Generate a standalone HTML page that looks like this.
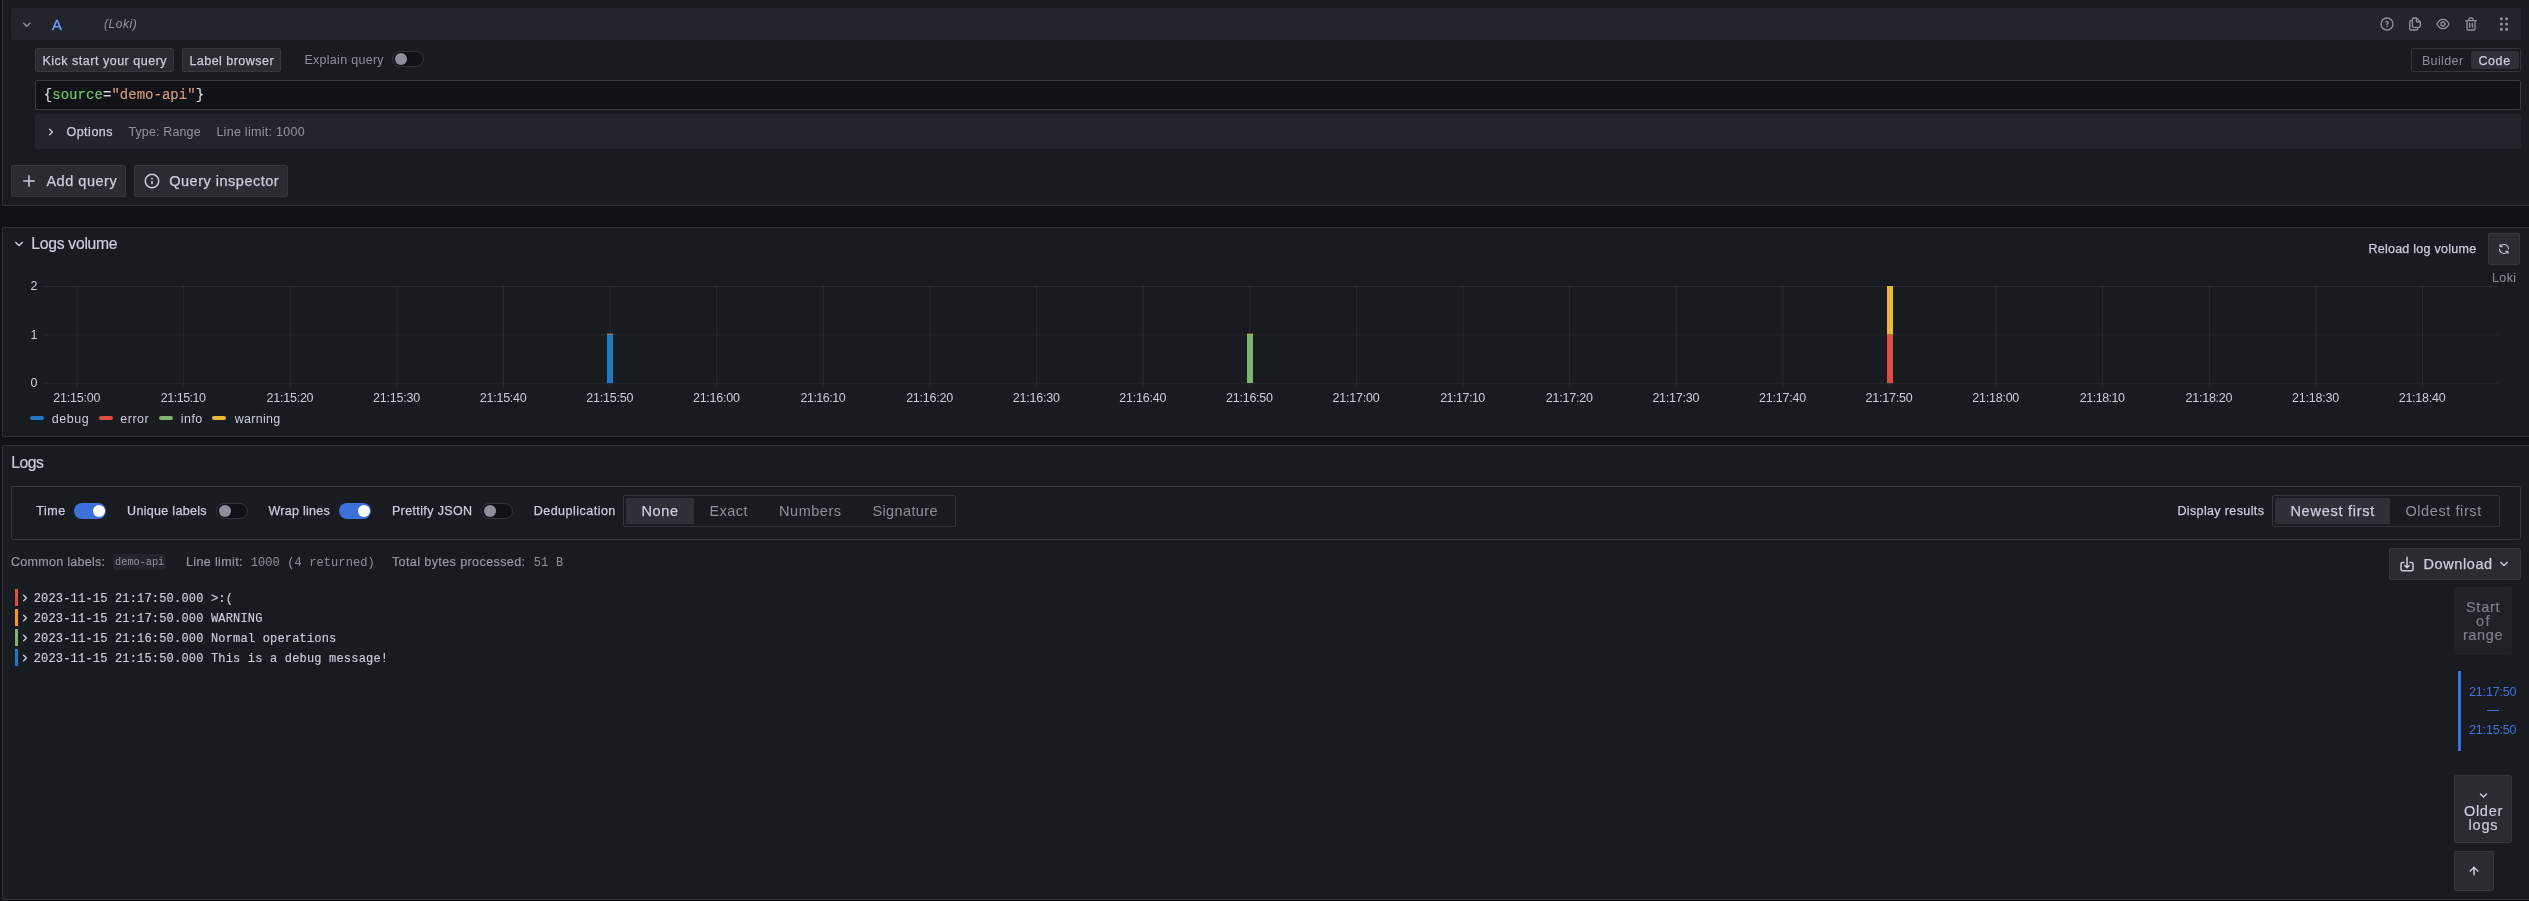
<!DOCTYPE html>
<html><head><meta charset="utf-8"><title>Explore - Loki</title>
<style>
html,body{margin:0;padding:0;background:#111217;}
html{width:2529px;height:901px;overflow:hidden;}
body{width:2529px;height:901px;overflow:hidden;position:relative;font-family:"Liberation Sans",sans-serif;}
.b{position:absolute;box-sizing:border-box;display:block;}
.t{position:absolute;white-space:pre;display:block;}
#tx{position:absolute;left:0;top:0;width:2529px;height:901px;will-change:transform;}
</style></head><body>
<div class="b" style="left:2px;top:-6px;width:2527px;height:212px;background:#181b1f;border:1px solid #2f3136;border-radius:2px;border-right:none;border-top-right-radius:0;border-bottom-right-radius:0;"></div>
<div class="b" style="left:2px;top:227px;width:2527px;height:210px;background:#181b1f;border:1px solid #2f3136;border-radius:2px;border-right:none;border-top-right-radius:0;border-bottom-right-radius:0;"></div>
<div class="b" style="left:2px;top:445px;width:2527px;height:455px;background:#181b1f;border:1px solid #2f3136;border-radius:2px;border-right:none;border-top-right-radius:0;border-bottom-right-radius:0;"></div>
<div class="b" style="left:11px;top:8px;width:2510px;height:32px;background:#22252b;border-radius:2px;"></div>
<div class="b" style="left:35px;top:48px;width:139px;height:24px;background:#2a2c31;border:1px solid #36383e;border-radius:2px;"></div>
<div class="b" style="left:182px;top:48px;width:99px;height:24px;background:#2a2c31;border:1px solid #36383e;border-radius:2px;"></div>
<div class="b" style="left:392px;top:51px;width:32px;height:16px;background:#111217;border:1px solid #34363c;border-radius:8px;"></div>
<div class="b" style="left:395px;top:53px;width:12px;height:12px;background:#8e8e9b;border-radius:6px;"></div>
<div class="b" style="left:2411px;top:48px;width:110px;height:24px;border:1px solid #34363c;border-radius:2px;"></div>
<div class="b" style="left:2471px;top:51px;width:47.5px;height:18px;background:#2d3037;border-radius:2px;"></div>
<div class="b" style="left:35px;top:80px;width:2486px;height:30px;background:#111217;border:1px solid #3a3c42;border-radius:2px;"></div>
<div class="b" style="left:35px;top:114px;width:2486px;height:35px;background:#22252b;border-radius:2px;"></div>
<div class="b" style="left:11px;top:165px;width:115px;height:32px;background:#2a2c31;border:1px solid #36383e;border-radius:2px;"></div>
<div class="b" style="left:134px;top:165px;width:154px;height:32px;background:#2a2c31;border:1px solid #36383e;border-radius:2px;"></div>
<div class="b" style="left:2488px;top:233px;width:32px;height:32px;background:#2a2c31;border:1px solid #36383e;border-radius:2px;"></div>
<div class="b" style="left:30px;top:416px;width:14px;height:4px;background:#1f78c1;border-radius:2px;"></div>
<div class="b" style="left:99px;top:416px;width:14px;height:4px;background:#e24d42;border-radius:2px;"></div>
<div class="b" style="left:159px;top:416px;width:14px;height:4px;background:#7eb26d;border-radius:2px;"></div>
<div class="b" style="left:212px;top:416px;width:14px;height:4px;background:#eab839;border-radius:2px;"></div>
<div class="b" style="left:11px;top:486px;width:2510px;height:54px;border:1px solid #383a40;border-radius:2px;"></div>
<div class="b" style="left:74px;top:503px;width:32px;height:16px;background:#3d71d9;border-radius:8px;"></div>
<div class="b" style="left:92.6px;top:505px;width:12px;height:12px;background:#ffffff;border-radius:6px;"></div>
<div class="b" style="left:216px;top:503px;width:32px;height:16px;background:#111217;border:1px solid #34363c;border-radius:8px;"></div>
<div class="b" style="left:219px;top:505px;width:12px;height:12px;background:#8e8e9b;border-radius:6px;"></div>
<div class="b" style="left:339px;top:503px;width:32px;height:16px;background:#3d71d9;border-radius:8px;"></div>
<div class="b" style="left:357.6px;top:505px;width:12px;height:12px;background:#ffffff;border-radius:6px;"></div>
<div class="b" style="left:481px;top:503px;width:32px;height:16px;background:#111217;border:1px solid #34363c;border-radius:8px;"></div>
<div class="b" style="left:484px;top:505px;width:12px;height:12px;background:#8e8e9b;border-radius:6px;"></div>
<div class="b" style="left:623px;top:495px;width:333px;height:32px;border:1px solid #34363c;border-radius:2px;"></div>
<div class="b" style="left:626px;top:498px;width:68px;height:26px;background:#2d3037;border-radius:2px;"></div>
<div class="b" style="left:2272px;top:495px;width:228px;height:32px;border:1px solid #34363c;border-radius:2px;"></div>
<div class="b" style="left:2275px;top:498px;width:115px;height:26px;background:#2d3037;border-radius:2px;"></div>
<div class="b" style="left:113px;top:554px;width:53px;height:16px;background:#22252b;border-radius:2px;"></div>
<div class="b" style="left:2389px;top:548px;width:132px;height:32px;background:#2a2c31;border:1px solid #36383e;border-radius:2px;"></div>
<div class="b" style="left:15px;top:589px;width:3px;height:17px;background:#e24d42;"></div>
<div class="b" style="left:15px;top:609px;width:3px;height:17px;background:#ff9900;"></div>
<div class="b" style="left:15px;top:629px;width:3px;height:17px;background:#7eb26d;"></div>
<div class="b" style="left:15px;top:649px;width:3px;height:17px;background:#1f78c1;"></div>
<div class="b" style="left:2454px;top:587px;width:58px;height:68px;background:#1f2227;border-radius:2px;"></div>
<div class="b" style="left:2458px;top:671px;width:3px;height:80px;background:#3d71d9;"></div>
<div class="b" style="left:2487px;top:710px;width:12px;height:1px;background:#4474da;"></div>
<div class="b" style="left:2454px;top:775px;width:58px;height:68px;background:#2a2c31;border:1px solid #36383e;border-radius:2px;"></div>
<div class="b" style="left:2454px;top:851px;width:40px;height:40px;background:#2a2c31;border:1px solid #36383e;border-radius:2px;"></div>
<svg class="b" style="left:18.25px;top:15.65px;" width="17.5" height="17.5" viewBox="0 0 24 24"><path d="M17,9.17a1,1,0,0,0-1.41,0L12,12.71,8.46,9.17a1,1,0,0,0-1.41,0,1,1,0,0,0,0,1.42l4.24,4.24a1,1,0,0,0,1.42,0L17,10.59A1,1,0,0,0,17,9.17Z" fill="rgba(204,204,220,0.65)"/></svg>
<svg class="b" style="left:2379px;top:16px;" width="16" height="16" viewBox="0 0 24 24"><path d="M11.29,15.29a1.58,1.58,0,0,0-.12.15.76.76,0,0,0-.09.18.64.64,0,0,0-.06.18,1.36,1.36,0,0,0,0,.2.84.84,0,0,0,.08.38.9.9,0,0,0,.54.54.94.94,0,0,0,.76,0,.9.9,0,0,0,.54-.54A1,1,0,0,0,13,16a1,1,0,0,0-.29-.71A1,1,0,0,0,11.29,15.29ZM12,2A10,10,0,1,0,22,12,10,10,0,0,0,12,2Zm0,18a8,8,0,1,1,8-8A8,8,0,0,1,12,20ZM12,7A3,3,0,0,0,9.4,8.5a1,1,0,1,0,1.73,1A1,1,0,0,1,12,9a1,1,0,0,1,0,2,1,1,0,0,0-1,1v1a1,1,0,0,0,2,0v-.18A3,3,0,0,0,12,7Z" fill="rgba(204,204,220,0.65)"/></svg>
<svg class="b" style="left:2407px;top:16px;" width="16" height="16" viewBox="0 0 24 24"><path d="M21,8.94a1.31,1.31,0,0,0-.06-.27l0-.09a1.07,1.07,0,0,0-.19-.28h0l-6-6h0a1.07,1.07,0,0,0-.28-.19.32.32,0,0,0-.09,0A.88.88,0,0,0,14.05,2H10A3,3,0,0,0,7,5V6H6A3,3,0,0,0,3,9V19a3,3,0,0,0,3,3h8a3,3,0,0,0,3-3V18h1a3,3,0,0,0,3-3V9S21,9,21,8.94ZM15,5.41,17.59,8H16a1,1,0,0,1-1-1ZM15,19a1,1,0,0,1-1,1H6a1,1,0,0,1-1-1V9A1,1,0,0,1,6,8H7v7a3,3,0,0,0,3,3h5Zm4-4a1,1,0,0,1-1,1H10a1,1,0,0,1-1-1V5a1,1,0,0,1,1-1h3V7a3,3,0,0,0,3,3h3Z" fill="rgba(204,204,220,0.65)"/></svg>
<svg class="b" style="left:2435px;top:16px;" width="16" height="16" viewBox="0 0 24 24"><path d="M21.92,11.6C19.9,6.91,16.1,4,12,4S4.1,6.91,2.08,11.6a1,1,0,0,0,0,.8C4.1,17.09,7.9,20,12,20s7.9-2.91,9.92-7.6A1,1,0,0,0,21.92,11.6ZM12,18c-3.17,0-6.17-2.29-7.9-6C5.83,8.29,8.83,6,12,6s6.17,2.29,7.9,6C18.17,15.71,15.17,18,12,18ZM12,8a4,4,0,1,0,4,4A4,4,0,0,0,12,8Zm0,6a2,2,0,1,1,2-2A2,2,0,0,1,12,14Z" fill="rgba(204,204,220,0.65)"/></svg>
<svg class="b" style="left:2463px;top:16px;" width="16" height="16" viewBox="0 0 24 24"><path d="M10,18a1,1,0,0,0,1-1V11a1,1,0,0,0-2,0v6A1,1,0,0,0,10,18ZM20,6H16V5a3,3,0,0,0-3-3H11A3,3,0,0,0,8,5V6H4A1,1,0,0,0,4,8H5V19a3,3,0,0,0,3,3h8a3,3,0,0,0,3-3V8h1a1,1,0,0,0,0-2ZM10,5a1,1,0,0,1,1-1h2a1,1,0,0,1,1,1V6H10Zm7,14a1,1,0,0,1-1,1H8a1,1,0,0,1-1-1V8H17Zm-3-1a1,1,0,0,0,1-1V11a1,1,0,0,0-2,0v6A1,1,0,0,0,14,18Z" fill="rgba(204,204,220,0.65)"/></svg>
<svg class="b" style="left:2495px;top:15px;" width="18" height="18" viewBox="0 0 24 24"><path d="M8.5,10a2,2,0,1,0,2,2A2,2,0,0,0,8.5,10Zm0,7a2,2,0,1,0,2,2A2,2,0,0,0,8.5,17Zm7-10a2,2,0,1,0-2-2A2,2,0,0,0,15.5,7Zm-7-4a2,2,0,1,0,2,2A2,2,0,0,0,8.5,3Zm7,14a2,2,0,1,0,2,2A2,2,0,0,0,15.5,17Zm0-7a2,2,0,1,0,2,2A2,2,0,0,0,15.5,10Z" fill="rgba(204,204,220,0.65)"/></svg>
<svg class="b" style="left:43px;top:124.3px;" width="16" height="16" viewBox="0 0 24 24"><path d="M14.83,11.29,10.59,7.05a1,1,0,0,0-1.42,0,1,1,0,0,0,0,1.41L12.71,12,9.17,15.54a1,1,0,0,0,0,1.41,1,1,0,0,0,.71.29,1,1,0,0,0,.71-.29l4.24-4.24A1,1,0,0,0,14.83,11.29Z" fill="#ccccdc"/></svg>
<svg class="b" style="left:20px;top:172px;" width="18" height="18" viewBox="0 0 24 24"><path d="M19,11H13V5a1,1,0,0,0-2,0v6H5a1,1,0,0,0,0,2h6v6a1,1,0,0,0,2,0V13h6a1,1,0,0,0,0-2Z" fill="#ccccdc"/></svg>
<svg class="b" style="left:142.9px;top:172px;" width="18" height="18" viewBox="0 0 24 24"><path d="M12,2A10,10,0,1,0,22,12,10.01114,10.01114,0,0,0,12,2Zm0,18a8,8,0,1,1,8-8A8.00917,8.00917,0,0,1,12,20Zm0-8.5a1,1,0,0,0-1,1v3a1,1,0,0,0,2,0v-3A1,1,0,0,0,12,11.5Zm0-4a1.25,1.25,0,1,0,1.25,1.25A1.25,1.25,0,0,0,12,7.5Z" fill="#ccccdc"/></svg>
<svg class="b" style="left:10px;top:235.3px;" width="18" height="18" viewBox="0 0 24 24"><path d="M17,9.17a1,1,0,0,0-1.41,0L12,12.71,8.46,9.17a1,1,0,0,0-1.41,0,1,1,0,0,0,0,1.42l4.24,4.24a1,1,0,0,0,1.42,0L17,10.59A1,1,0,0,0,17,9.17Z" fill="#ccccdc"/></svg>
<svg class="b" style="left:2498px;top:243px;" width="12" height="12" viewBox="0 0 24 24"><path d="M19.91,15.51H15.38a1,1,0,0,0,0,2h2.4A8,8,0,0,1,4,12a1,1,0,0,0-2,0,10,10,0,0,0,16.88,7.23V21a1,1,0,0,0,2,0V16.5A1,1,0,0,0,19.91,15.51ZM12,2A10,10,0,0,0,5.12,4.77V3a1,1,0,0,0-2,0V7.5a1,1,0,0,0,1,1h4.5a1,1,0,0,0,0-2H6.22A8,8,0,0,1,20,12a1,1,0,0,0,2,0A10,10,0,0,0,12,2Z" fill="#ccccdc"/></svg>
<svg class="b" style="left:0px;top:270px;" width="2529" height="130" viewBox="0 270 2529 130"><path d="M43 286.5 H2498" stroke="rgba(204,204,220,0.09)" stroke-width="1"/><path d="M43 334.95 H2498" stroke="rgba(204,204,220,0.09)" stroke-width="1"/><path d="M43 383.2 H2498" stroke="rgba(204,204,220,0.09)" stroke-width="1"/><path d="M77.1 286 V387" stroke="rgba(204,204,220,0.09)" stroke-width="1"/><path d="M183.71 286 V387" stroke="rgba(204,204,220,0.09)" stroke-width="1"/><path d="M290.32 286 V387" stroke="rgba(204,204,220,0.09)" stroke-width="1"/><path d="M396.93 286 V387" stroke="rgba(204,204,220,0.09)" stroke-width="1"/><path d="M503.54 286 V387" stroke="rgba(204,204,220,0.09)" stroke-width="1"/><path d="M610.15 286 V387" stroke="rgba(204,204,220,0.09)" stroke-width="1"/><path d="M716.76 286 V387" stroke="rgba(204,204,220,0.09)" stroke-width="1"/><path d="M823.37 286 V387" stroke="rgba(204,204,220,0.09)" stroke-width="1"/><path d="M929.98 286 V387" stroke="rgba(204,204,220,0.09)" stroke-width="1"/><path d="M1036.59 286 V387" stroke="rgba(204,204,220,0.09)" stroke-width="1"/><path d="M1143.2 286 V387" stroke="rgba(204,204,220,0.09)" stroke-width="1"/><path d="M1249.81 286 V387" stroke="rgba(204,204,220,0.09)" stroke-width="1"/><path d="M1356.42 286 V387" stroke="rgba(204,204,220,0.09)" stroke-width="1"/><path d="M1463.03 286 V387" stroke="rgba(204,204,220,0.09)" stroke-width="1"/><path d="M1569.64 286 V387" stroke="rgba(204,204,220,0.09)" stroke-width="1"/><path d="M1676.25 286 V387" stroke="rgba(204,204,220,0.09)" stroke-width="1"/><path d="M1782.86 286 V387" stroke="rgba(204,204,220,0.09)" stroke-width="1"/><path d="M1889.47 286 V387" stroke="rgba(204,204,220,0.09)" stroke-width="1"/><path d="M1996.08 286 V387" stroke="rgba(204,204,220,0.09)" stroke-width="1"/><path d="M2102.69 286 V387" stroke="rgba(204,204,220,0.09)" stroke-width="1"/><path d="M2209.3 286 V387" stroke="rgba(204,204,220,0.09)" stroke-width="1"/><path d="M2315.91 286 V387" stroke="rgba(204,204,220,0.09)" stroke-width="1"/><path d="M2422.52 286 V387" stroke="rgba(204,204,220,0.09)" stroke-width="1"/><rect x="607" y="334" width="6" height="49" fill="#1f78c1"/><rect x="607" y="333.7" width="6" height="0.6" fill="#eab839"/><rect x="1887" y="382.7" width="6" height="0.5" fill="#1f78c1"/><rect x="1247" y="334" width="6" height="49" fill="#7eb26d"/><rect x="1247" y="333.7" width="6" height="0.6" fill="#eab839"/><rect x="1887" y="334.5" width="6" height="48.5" fill="#e24d42"/><rect x="1887" y="286" width="6" height="48.5" fill="#eab839"/></svg>
<svg class="b" style="left:2398px;top:555px;" width="18" height="18" viewBox="0 0 24 24"><path d="M8.29,13.29a1,1,0,0,0,0,1.42l3,3a1,1,0,0,0,1.42,0l3-3a1,1,0,0,0-1.42-1.42L13,14.59V3a1,1,0,0,0-2,0V14.59l-1.29-1.3A1,1,0,0,0,8.29,13.29ZM18,9H16a1,1,0,0,0,0,2h2a1,1,0,0,1,1,1v7a1,1,0,0,1-1,1H6a1,1,0,0,1-1-1V12a1,1,0,0,1,1-1H8A1,1,0,0,0,8,9H6a3,3,0,0,0-3,3v7a3,3,0,0,0,3,3H18a3,3,0,0,0,3-3V12A3,3,0,0,0,18,9Z" fill="#ccccdc"/></svg>
<svg class="b" style="left:2495px;top:555.3px;" width="18" height="18" viewBox="0 0 24 24"><path d="M17,9.17a1,1,0,0,0-1.41,0L12,12.71,8.46,9.17a1,1,0,0,0-1.41,0,1,1,0,0,0,0,1.42l4.24,4.24a1,1,0,0,0,1.42,0L17,10.59A1,1,0,0,0,17,9.17Z" fill="#ccccdc"/></svg>
<svg class="b" style="left:16.75px;top:589.5px;" width="16" height="16" viewBox="0 0 24 24"><path d="M14.83,11.29,10.59,7.05a1,1,0,0,0-1.42,0,1,1,0,0,0,0,1.41L12.71,12,9.17,15.54a1,1,0,0,0,0,1.41,1,1,0,0,0,.71.29,1,1,0,0,0,.71-.29l4.24-4.24A1,1,0,0,0,14.83,11.29Z" fill="#ccccdc"/></svg>
<svg class="b" style="left:16.75px;top:609.5px;" width="16" height="16" viewBox="0 0 24 24"><path d="M14.83,11.29,10.59,7.05a1,1,0,0,0-1.42,0,1,1,0,0,0,0,1.41L12.71,12,9.17,15.54a1,1,0,0,0,0,1.41,1,1,0,0,0,.71.29,1,1,0,0,0,.71-.29l4.24-4.24A1,1,0,0,0,14.83,11.29Z" fill="#ccccdc"/></svg>
<svg class="b" style="left:16.75px;top:629.5px;" width="16" height="16" viewBox="0 0 24 24"><path d="M14.83,11.29,10.59,7.05a1,1,0,0,0-1.42,0,1,1,0,0,0,0,1.41L12.71,12,9.17,15.54a1,1,0,0,0,0,1.41,1,1,0,0,0,.71.29,1,1,0,0,0,.71-.29l4.24-4.24A1,1,0,0,0,14.83,11.29Z" fill="#ccccdc"/></svg>
<svg class="b" style="left:16.75px;top:649.5px;" width="16" height="16" viewBox="0 0 24 24"><path d="M14.83,11.29,10.59,7.05a1,1,0,0,0-1.42,0,1,1,0,0,0,0,1.41L12.71,12,9.17,15.54a1,1,0,0,0,0,1.41,1,1,0,0,0,.71.29,1,1,0,0,0,.71-.29l4.24-4.24A1,1,0,0,0,14.83,11.29Z" fill="#ccccdc"/></svg>
<svg class="b" style="left:2474.5px;top:786.8px;" width="17" height="17" viewBox="0 0 24 24"><path d="M17,9.17a1,1,0,0,0-1.41,0L12,12.71,8.46,9.17a1,1,0,0,0-1.41,0,1,1,0,0,0,0,1.42l4.24,4.24a1,1,0,0,0,1.42,0L17,10.59A1,1,0,0,0,17,9.17Z" fill="#ccccdc"/></svg>
<svg class="b" style="left:2465px;top:861.8px;" width="18" height="18" viewBox="0 0 24 24"><path d="M17.71,11.29l-5-5a1,1,0,0,0-.33-.21,1,1,0,0,0-.76,0,1,1,0,0,0-.33.21l-5,5a1,1,0,0,0,1.42,1.42L11,9.41V17a1,1,0,0,0,2,0V9.41l3.29,3.3a1,1,0,0,0,1.42,0A1,1,0,0,0,17.71,11.29Z" fill="#ccccdc"/></svg>
<div id="tx">
<span class="t" style="left:52.10px;top:16.90px;font:400 14.8px/16px 'Liberation Sans', sans-serif;color:#6e9fff;letter-spacing:0.000px;-webkit-text-stroke:0.3px #6e9fff;">A</span>
<span class="t" style="left:104.00px;top:17.00px;font:italic 400 12px/14px 'Liberation Sans', sans-serif;color:rgba(204,204,220,0.65);letter-spacing:0.559px;">(Loki)</span>
<span class="t" style="left:42.40px;top:54.00px;font:400 12.5px/14px 'Liberation Sans', sans-serif;color:#ccccdc;letter-spacing:0.514px;-webkit-text-stroke:0.25px #ccccdc;">Kick start your query</span>
<span class="t" style="left:189.40px;top:54.00px;font:400 12.5px/14px 'Liberation Sans', sans-serif;color:#ccccdc;letter-spacing:0.474px;-webkit-text-stroke:0.25px #ccccdc;">Label browser</span>
<span class="t" style="left:304.40px;top:53.00px;font:400 12.5px/14px 'Liberation Sans', sans-serif;color:rgba(204,204,220,0.65);letter-spacing:0.288px;">Explain query</span>
<span class="t" style="left:2421.90px;top:54.00px;font:400 12.5px/14px 'Liberation Sans', sans-serif;color:rgba(204,204,220,0.65);letter-spacing:0.382px;">Builder</span>
<span class="t" style="left:2478.40px;top:54.00px;font:400 12.5px/14px 'Liberation Sans', sans-serif;color:#ccccdc;letter-spacing:0.606px;-webkit-text-stroke:0.25px #ccccdc;">Code</span>
<span class="t" style="left:43.80px;top:86.50px;font:400 14px/16px 'Liberation Mono', monospace;color:#d6d6e0;letter-spacing:0.000px;-webkit-text-stroke:0.2px #d6d6e0;">{</span>
<span class="t" style="left:52.20px;top:86.50px;font:400 14px/16px 'Liberation Mono', monospace;color:#70c762;letter-spacing:0.038px;-webkit-text-stroke:0.2px #70c762;">source</span>
<span class="t" style="left:103.00px;top:86.50px;font:400 14px/16px 'Liberation Mono', monospace;color:#d6d6e0;letter-spacing:0.000px;-webkit-text-stroke:0.2px #d6d6e0;">=</span>
<span class="t" style="left:111.40px;top:86.50px;font:400 14px/16px 'Liberation Mono', monospace;color:#d6987c;letter-spacing:0.021px;-webkit-text-stroke:0.2px #d6987c;">"demo-api"</span>
<span class="t" style="left:195.80px;top:86.50px;font:400 14px/16px 'Liberation Mono', monospace;color:#d6d6e0;letter-spacing:0.000px;-webkit-text-stroke:0.2px #d6d6e0;">}</span>
<span class="t" style="left:66.40px;top:125.00px;font:400 12.5px/14px 'Liberation Sans', sans-serif;color:#ccccdc;letter-spacing:0.520px;-webkit-text-stroke:0.25px #ccccdc;">Options</span>
<span class="t" style="left:128.40px;top:125.00px;font:400 12.5px/14px 'Liberation Sans', sans-serif;color:rgba(204,204,220,0.65);letter-spacing:0.132px;">Type: Range</span>
<span class="t" style="left:216.40px;top:125.00px;font:400 12.5px/14px 'Liberation Sans', sans-serif;color:rgba(204,204,220,0.65);letter-spacing:0.275px;">Line limit: 1000</span>
<span class="t" style="left:46.40px;top:173.00px;font:400 14.5px/16px 'Liberation Sans', sans-serif;color:#ccccdc;letter-spacing:0.525px;-webkit-text-stroke:0.25px #ccccdc;">Add query</span>
<span class="t" style="left:169.20px;top:173.00px;font:400 14.5px/16px 'Liberation Sans', sans-serif;color:#ccccdc;letter-spacing:0.511px;-webkit-text-stroke:0.25px #ccccdc;">Query inspector</span>
<span class="t" style="left:31.30px;top:235.00px;font:400 15.7px/17px 'Liberation Sans', sans-serif;color:#ccccdc;letter-spacing:-0.265px;-webkit-text-stroke:0.2px #ccccdc;">Logs volume</span>
<span class="t" style="left:2368.40px;top:242.00px;font:400 12.5px/14px 'Liberation Sans', sans-serif;color:#ccccdc;letter-spacing:0.260px;-webkit-text-stroke:0.25px #ccccdc;">Reload log volume</span>
<span class="t" style="left:2491.90px;top:271.00px;font:400 12.5px/14px 'Liberation Sans', sans-serif;color:rgba(204,204,220,0.65);letter-spacing:0.423px;">Loki</span>
<span class="t" style="left:30.50px;top:279.00px;font:400 12.5px/14px 'Liberation Sans', sans-serif;color:#ccccdc;letter-spacing:0.000px;">2</span>
<span class="t" style="left:30.50px;top:328.00px;font:400 12.5px/14px 'Liberation Sans', sans-serif;color:#ccccdc;letter-spacing:0.000px;">1</span>
<span class="t" style="left:30.50px;top:376.00px;font:400 12.5px/14px 'Liberation Sans', sans-serif;color:#ccccdc;letter-spacing:0.000px;">0</span>
<span class="t" style="left:53.25px;top:391.00px;font:400 12.5px/14px 'Liberation Sans', sans-serif;color:#ccccdc;letter-spacing:-0.222px;">21:15:00</span>
<span class="t" style="left:160.81px;top:391.00px;font:400 12.5px/14px 'Liberation Sans', sans-serif;color:#ccccdc;letter-spacing:-0.494px;">21:15:10</span>
<span class="t" style="left:266.47px;top:391.00px;font:400 12.5px/14px 'Liberation Sans', sans-serif;color:#ccccdc;letter-spacing:-0.222px;">21:15:20</span>
<span class="t" style="left:373.08px;top:391.00px;font:400 12.5px/14px 'Liberation Sans', sans-serif;color:#ccccdc;letter-spacing:-0.222px;">21:15:30</span>
<span class="t" style="left:479.69px;top:391.00px;font:400 12.5px/14px 'Liberation Sans', sans-serif;color:#ccccdc;letter-spacing:-0.222px;">21:15:40</span>
<span class="t" style="left:586.30px;top:391.00px;font:400 12.5px/14px 'Liberation Sans', sans-serif;color:#ccccdc;letter-spacing:-0.222px;">21:15:50</span>
<span class="t" style="left:692.91px;top:391.00px;font:400 12.5px/14px 'Liberation Sans', sans-serif;color:#ccccdc;letter-spacing:-0.222px;">21:16:00</span>
<span class="t" style="left:800.47px;top:391.00px;font:400 12.5px/14px 'Liberation Sans', sans-serif;color:#ccccdc;letter-spacing:-0.494px;">21:16:10</span>
<span class="t" style="left:906.13px;top:391.00px;font:400 12.5px/14px 'Liberation Sans', sans-serif;color:#ccccdc;letter-spacing:-0.222px;">21:16:20</span>
<span class="t" style="left:1012.74px;top:391.00px;font:400 12.5px/14px 'Liberation Sans', sans-serif;color:#ccccdc;letter-spacing:-0.222px;">21:16:30</span>
<span class="t" style="left:1119.35px;top:391.00px;font:400 12.5px/14px 'Liberation Sans', sans-serif;color:#ccccdc;letter-spacing:-0.222px;">21:16:40</span>
<span class="t" style="left:1225.96px;top:391.00px;font:400 12.5px/14px 'Liberation Sans', sans-serif;color:#ccccdc;letter-spacing:-0.222px;">21:16:50</span>
<span class="t" style="left:1332.57px;top:391.00px;font:400 12.5px/14px 'Liberation Sans', sans-serif;color:#ccccdc;letter-spacing:-0.222px;">21:17:00</span>
<span class="t" style="left:1440.13px;top:391.00px;font:400 12.5px/14px 'Liberation Sans', sans-serif;color:#ccccdc;letter-spacing:-0.494px;">21:17:10</span>
<span class="t" style="left:1545.79px;top:391.00px;font:400 12.5px/14px 'Liberation Sans', sans-serif;color:#ccccdc;letter-spacing:-0.222px;">21:17:20</span>
<span class="t" style="left:1652.40px;top:391.00px;font:400 12.5px/14px 'Liberation Sans', sans-serif;color:#ccccdc;letter-spacing:-0.222px;">21:17:30</span>
<span class="t" style="left:1759.01px;top:391.00px;font:400 12.5px/14px 'Liberation Sans', sans-serif;color:#ccccdc;letter-spacing:-0.222px;">21:17:40</span>
<span class="t" style="left:1865.62px;top:391.00px;font:400 12.5px/14px 'Liberation Sans', sans-serif;color:#ccccdc;letter-spacing:-0.222px;">21:17:50</span>
<span class="t" style="left:1972.23px;top:391.00px;font:400 12.5px/14px 'Liberation Sans', sans-serif;color:#ccccdc;letter-spacing:-0.222px;">21:18:00</span>
<span class="t" style="left:2079.79px;top:391.00px;font:400 12.5px/14px 'Liberation Sans', sans-serif;color:#ccccdc;letter-spacing:-0.494px;">21:18:10</span>
<span class="t" style="left:2185.45px;top:391.00px;font:400 12.5px/14px 'Liberation Sans', sans-serif;color:#ccccdc;letter-spacing:-0.222px;">21:18:20</span>
<span class="t" style="left:2292.06px;top:391.00px;font:400 12.5px/14px 'Liberation Sans', sans-serif;color:#ccccdc;letter-spacing:-0.222px;">21:18:30</span>
<span class="t" style="left:2398.67px;top:391.00px;font:400 12.5px/14px 'Liberation Sans', sans-serif;color:#ccccdc;letter-spacing:-0.222px;">21:18:40</span>
<span class="t" style="left:51.70px;top:412.00px;font:400 12.5px/14px 'Liberation Sans', sans-serif;color:#ccccdc;letter-spacing:0.585px;">debug</span>
<span class="t" style="left:120.20px;top:412.00px;font:400 12.5px/14px 'Liberation Sans', sans-serif;color:#ccccdc;letter-spacing:0.552px;">error</span>
<span class="t" style="left:180.70px;top:412.00px;font:400 12.5px/14px 'Liberation Sans', sans-serif;color:#ccccdc;letter-spacing:0.482px;">info</span>
<span class="t" style="left:234.70px;top:412.00px;font:400 12.5px/14px 'Liberation Sans', sans-serif;color:#ccccdc;letter-spacing:0.304px;">warning</span>
<span class="t" style="left:11.30px;top:453.50px;font:400 15.7px/17px 'Liberation Sans', sans-serif;color:#ccccdc;letter-spacing:-0.506px;-webkit-text-stroke:0.2px #ccccdc;">Logs</span>
<span class="t" style="left:36.20px;top:503.50px;font:400 12.5px/14px 'Liberation Sans', sans-serif;color:#ccccdc;letter-spacing:0.529px;-webkit-text-stroke:0.25px #ccccdc;">Time</span>
<span class="t" style="left:127.10px;top:503.50px;font:400 12.5px/14px 'Liberation Sans', sans-serif;color:#ccccdc;letter-spacing:0.313px;-webkit-text-stroke:0.25px #ccccdc;">Unique labels</span>
<span class="t" style="left:268.50px;top:503.50px;font:400 12.5px/14px 'Liberation Sans', sans-serif;color:#ccccdc;letter-spacing:0.264px;-webkit-text-stroke:0.25px #ccccdc;">Wrap lines</span>
<span class="t" style="left:391.90px;top:503.50px;font:400 12.5px/14px 'Liberation Sans', sans-serif;color:#ccccdc;letter-spacing:0.374px;-webkit-text-stroke:0.25px #ccccdc;">Prettify JSON</span>
<span class="t" style="left:533.70px;top:503.50px;font:400 12.5px/14px 'Liberation Sans', sans-serif;color:#ccccdc;letter-spacing:0.488px;-webkit-text-stroke:0.25px #ccccdc;">Deduplication</span>
<span class="t" style="left:641.40px;top:503.00px;font:400 14.5px/16px 'Liberation Sans', sans-serif;color:#ccccdc;letter-spacing:0.679px;-webkit-text-stroke:0.25px #ccccdc;">None</span>
<span class="t" style="left:709.40px;top:503.00px;font:400 14.5px/16px 'Liberation Sans', sans-serif;color:rgba(204,204,220,0.65);letter-spacing:0.484px;">Exact</span>
<span class="t" style="left:779.00px;top:503.00px;font:400 14.5px/16px 'Liberation Sans', sans-serif;color:rgba(204,204,220,0.65);letter-spacing:0.546px;">Numbers</span>
<span class="t" style="left:872.40px;top:503.00px;font:400 14.5px/16px 'Liberation Sans', sans-serif;color:rgba(204,204,220,0.65);letter-spacing:0.391px;">Signature</span>
<span class="t" style="left:2177.40px;top:504.00px;font:400 12.5px/14px 'Liberation Sans', sans-serif;color:#ccccdc;letter-spacing:0.373px;-webkit-text-stroke:0.25px #ccccdc;">Display results</span>
<span class="t" style="left:2290.40px;top:503.00px;font:400 14.5px/16px 'Liberation Sans', sans-serif;color:#ccccdc;letter-spacing:0.751px;-webkit-text-stroke:0.25px #ccccdc;">Newest first</span>
<span class="t" style="left:2405.40px;top:503.00px;font:400 14.5px/16px 'Liberation Sans', sans-serif;color:rgba(204,204,220,0.65);letter-spacing:0.592px;">Oldest first</span>
<span class="t" style="left:10.90px;top:555.00px;font:400 12.5px/14px 'Liberation Sans', sans-serif;color:rgba(204,204,220,0.65);letter-spacing:0.299px;-webkit-text-stroke:0.2px rgba(204,204,220,0.65);">Common labels:</span>
<span class="t" style="left:115.10px;top:556.00px;font:400 10.3px/12px 'Liberation Mono', monospace;color:rgba(204,204,220,0.65);letter-spacing:-0.033px;">demo-api</span>
<span class="t" style="left:185.90px;top:555.00px;font:400 12.5px/14px 'Liberation Sans', sans-serif;color:rgba(204,204,220,0.65);letter-spacing:0.390px;-webkit-text-stroke:0.2px rgba(204,204,220,0.65);">Line limit:</span>
<span class="t" style="left:250.70px;top:556.00px;font:400 12px/14px 'Liberation Mono', monospace;color:rgba(204,204,220,0.65);letter-spacing:0.105px;">1000 (4 returned)</span>
<span class="t" style="left:391.90px;top:555.00px;font:400 12.5px/14px 'Liberation Sans', sans-serif;color:rgba(204,204,220,0.65);letter-spacing:0.420px;-webkit-text-stroke:0.2px rgba(204,204,220,0.65);">Total bytes processed:</span>
<span class="t" style="left:533.70px;top:556.00px;font:400 12px/14px 'Liberation Mono', monospace;color:rgba(204,204,220,0.65);letter-spacing:0.198px;">51 B</span>
<span class="t" style="left:2423.40px;top:556.00px;font:400 14.5px/16px 'Liberation Sans', sans-serif;color:#ccccdc;letter-spacing:0.616px;-webkit-text-stroke:0.25px #ccccdc;">Download</span>
<span class="t" style="left:33.70px;top:591.50px;font:400 12px/14px 'Liberation Mono', monospace;color:#ccccdc;letter-spacing:0.184px;-webkit-text-stroke:0.15px #ccccdc;">2023-11-15 21:17:50.000 &gt;:(</span>
<span class="t" style="left:33.70px;top:611.50px;font:400 12px/14px 'Liberation Mono', monospace;color:#ccccdc;letter-spacing:0.184px;-webkit-text-stroke:0.15px #ccccdc;">2023-11-15 21:17:50.000 WARNING</span>
<span class="t" style="left:33.70px;top:631.50px;font:400 12px/14px 'Liberation Mono', monospace;color:#ccccdc;letter-spacing:0.184px;-webkit-text-stroke:0.15px #ccccdc;">2023-11-15 21:16:50.000 Normal operations</span>
<span class="t" style="left:33.70px;top:651.50px;font:400 12px/14px 'Liberation Mono', monospace;color:#ccccdc;letter-spacing:0.184px;-webkit-text-stroke:0.15px #ccccdc;">2023-11-15 21:15:50.000 This is a debug message!</span>
<span class="t" style="left:2465.90px;top:599.00px;font:400 14.5px/16px 'Liberation Sans', sans-serif;color:rgba(204,204,220,0.5);letter-spacing:0.770px;-webkit-text-stroke:0.2px rgba(204,204,220,0.5);">Start</span>
<span class="t" style="left:2475.90px;top:613.00px;font:400 14.5px/16px 'Liberation Sans', sans-serif;color:rgba(204,204,220,0.5);letter-spacing:1.607px;-webkit-text-stroke:0.2px rgba(204,204,220,0.5);">of</span>
<span class="t" style="left:2462.90px;top:627.00px;font:400 14.5px/16px 'Liberation Sans', sans-serif;color:rgba(204,204,220,0.5);letter-spacing:0.654px;-webkit-text-stroke:0.2px rgba(204,204,220,0.5);">range</span>
<span class="t" style="left:2469.00px;top:684.70px;font:400 12.5px/14px 'Liberation Sans', sans-serif;color:#4474da;letter-spacing:-0.165px;">21:17:50</span>
<span class="t" style="left:2469.00px;top:722.50px;font:400 12.5px/14px 'Liberation Sans', sans-serif;color:#4474da;letter-spacing:-0.165px;">21:15:50</span>
<span class="t" style="left:2463.90px;top:802.50px;font:400 14.5px/16px 'Liberation Sans', sans-serif;color:#ccccdc;letter-spacing:0.736px;-webkit-text-stroke:0.2px #ccccdc;">Older</span>
<span class="t" style="left:2468.40px;top:817.00px;font:400 14.5px/16px 'Liberation Sans', sans-serif;color:#ccccdc;letter-spacing:0.867px;-webkit-text-stroke:0.2px #ccccdc;">logs</span>
</div>
</body></html>
